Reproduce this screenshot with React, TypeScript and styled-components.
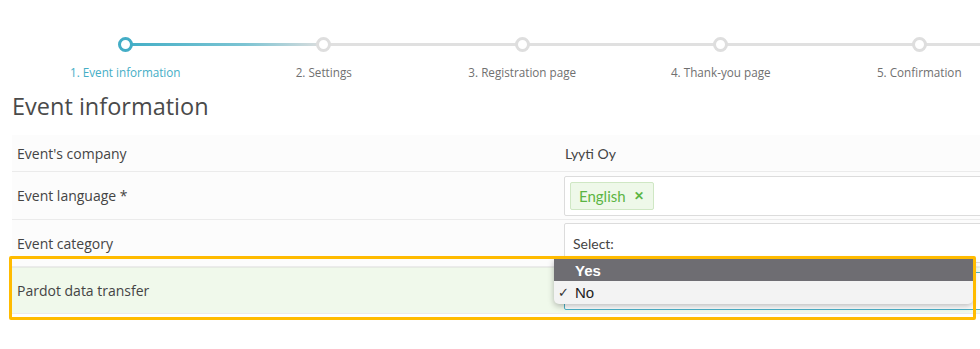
import React from "react";
import styled, { createGlobalStyle, css } from "styled-components";

const GlobalStyle = createGlobalStyle`
  html, body {
    margin: 0;
    padding: 0;
    background: #ffffff;
    overflow: hidden;
  }
  body {
    font-family: "Open Sans", "Noto Sans", sans-serif;
    color: #444;
  }
`;

const STEP_W = 198.5;

const steps = [
  "1. Event information",
  "2. Settings",
  "3. Registration page",
  "4. Thank-you page",
  "5. Confirmation",
];

const Page = styled.div`
  position: relative;
  width: 980px;
  height: 349px;
  overflow: hidden;
`;

const Stepper = styled.div`
  display: flex;
  padding: 37px 0 0 26px;
  width: 1200px;
`;

const Step = styled.div<{ $first?: boolean }>`
  position: relative;
  width: ${STEP_W}px;
  flex: none;
  display: flex;
  flex-direction: column;
  align-items: center;

  &::before {
    content: "";
    position: absolute;
    top: 6px;
    left: 50%;
    width: ${STEP_W}px;
    height: 3px;
    background: ${(p) =>
      p.$first ? "linear-gradient(90deg, #42aec6 0%, #7cc4d3 60%, #dedede 100%)" : "#e0e0e0"};
  }
`;

const Dot = styled.span<{ $active?: boolean }>`
  position: relative;
  z-index: 1;
  box-sizing: border-box;
  width: 15px;
  height: 15px;
  border-radius: 50%;
  background: #fff;
  border: 3px solid ${(p) => (p.$active ? "#43adc6" : "#dedede")};
`;

const StepLabel = styled.span<{ $active?: boolean }>`
  margin-top: 12px;
  font-size: 11.7px;
  line-height: 16px;
  white-space: nowrap;
  color: ${(p) => (p.$active ? "#45aec6" : "#707070")};
`;

const Heading = styled.h1`
  margin: 11px 0 0 12px;
  font-size: 23.5px;
  line-height: 30px;
  font-weight: 400;
  color: #4a4a4a;
`;

const Form = styled.div`
  margin: 14px 0 0 12px;
  width: 1000px;
  background: #fcfcfc;
`;

const Row = styled.div<{ $h: number; $highlight?: boolean }>`
  display: grid;
  grid-template-columns: 552px 1fr;
  align-items: center;
  height: ${(p) => p.$h}px;
  border-bottom: 1px solid #ebebeb;
  box-sizing: border-box;
  ${(p) =>
    p.$highlight &&
    css`
      background: #f0f9eb;
      border-top: 1px solid #e6ebe3;
    `}
`;

const Label = styled.div`
  padding-left: 5px;
  font-size: 14px;
  color: #444;
`;

const Value = styled.div`
  font-family: "Lato", "Noto Sans", sans-serif;
  font-size: 14px;
  color: #444;
  padding-left: 1px;
`;

const Box = styled.div<{ $focus?: boolean; $h?: number }>`
  box-sizing: border-box;
  height: ${(p) => p.$h ?? 40}px;
  background: #fff;
  border: 1px solid ${(p) => (p.$focus ? "#4cb0c6" : "#dcdcdc")};
  border-radius: 2px;
  display: flex;
  align-items: center;
  padding: 0 5px;
  font-family: "Lato", "Noto Sans", sans-serif;
  font-size: 14px;
  color: #444;
`;

const Tag = styled.span`
  box-sizing: border-box;
  height: 28px;
  display: inline-flex;
  align-items: center;
  gap: 8px;
  padding: 0 9px 0 8px;
  background: #eef8e9;
  border: 1px solid #cfe7c4;
  border-radius: 2px;
  color: #5bb544;
  font-size: 15px;
`;

const TagX = styled.span`
  font-size: 12px;
  font-weight: 700;
  color: #5bb544;
`;

const Placeholder = styled.span`
  padding-left: 3px;
`;

const Outline = styled.div`
  position: absolute;
  left: 9px;
  top: 256px;
  width: 967px;
  height: 64px;
  box-sizing: border-box;
  border: 3px solid #ffbb00;
  border-radius: 2px;
  pointer-events: none;
  z-index: 3;
`;

const Menu = styled.div`
  position: absolute;
  left: 554px;
  top: 259px;
  width: 419px;
  background: #f3f3f3;
  border-radius: 0 0 5px 5px;
  box-shadow: 0 2px 6px rgba(0, 0, 0, 0.28);
  overflow: hidden;
  z-index: 2;
  font-family: "Liberation Sans", "Noto Sans", sans-serif;
  font-size: 15px;
`;

const Option = styled.div<{ $selected?: boolean }>`
  display: flex;
  align-items: center;
  height: ${(p) => (p.$selected ? 22 : 23)}px;
  padding-left: 4px;
  background: ${(p) => (p.$selected ? "#6e6d72" : "transparent")};
  color: ${(p) => (p.$selected ? "#fff" : "#222")};
  font-weight: ${(p) => (p.$selected ? 700 : 400)};
`;

const Check = styled.span`
  width: 17px;
  font-size: 13px;
  color: #333;
`;

export default function App() {
  return (
    <Page>
      <GlobalStyle />
      <Stepper>
        {steps.map((s, i) => (
          <Step key={s} $first={i === 0}>
            <Dot $active={i === 0} />
            <StepLabel $active={i === 0}>{s}</StepLabel>
          </Step>
        ))}
      </Stepper>
      <Heading>Event information</Heading>
      <Form>
        <Row $h={37}>
          <Label>Event's company</Label>
          <Value>Lyyti Oy</Value>
        </Row>
        <Row $h={48}>
          <Label>Event language *</Label>
          <Box>
            <Tag>
              English <TagX>✕</TagX>
            </Tag>
          </Box>
        </Row>
        <Row $h={47}>
          <Label>Event category</Label>
          <Box>
            <Placeholder>Select:</Placeholder>
          </Box>
        </Row>
        <Row $h={47} $highlight>
          <Label>Pardot data transfer</Label>
          <Box $focus $h={38} />
        </Row>
      </Form>
      <Menu>
        <Option $selected>
          <Check />
          Yes
        </Option>
        <Option>
          <Check>✓</Check>
          No
        </Option>
      </Menu>
      <Outline />
    </Page>
  );
}
